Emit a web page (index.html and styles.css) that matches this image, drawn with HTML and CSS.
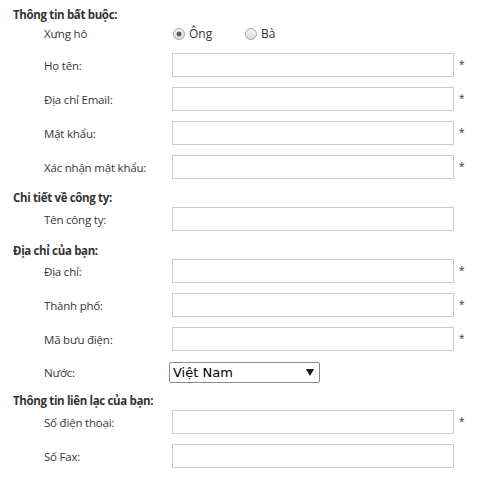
FILE: index.html
```html
<!DOCTYPE html>
<html lang="vi">
<head>
<meta charset="utf-8">
<title>Form</title>
<link rel="stylesheet" href="styles.css">
</head>
<body>
<form class="form">
  <div class="title t1">Thông tin bất buộc:</div>
  <div class="row radio-row">
    <span class="label">Xưng hô</span>
    <div class="radios">
      <label class="opt opt1"><input type="radio" name="g" checked><span>Ông</span></label>
      <label class="opt"><input type="radio" name="g"><span>Bà</span></label>
    </div>
  </div>
  <div class="row r-first"><span class="label">Họ tên:</span><input class="field" type="text"><span class="req">*</span></div>
  <div class="row"><span class="label">Địa chỉ Email:</span><input class="field" type="text"><span class="req">*</span></div>
  <div class="row"><span class="label">Mật khẩu:</span><input class="field" type="password"><span class="req">*</span></div>
  <div class="row"><span class="label">Xác nhận mật khẩu:</span><input class="field" type="password"><span class="req">*</span></div>

  <div class="title t2">Chi tiết về công ty:</div>
  <div class="row r-after2"><span class="label">Tên công ty:</span><input class="field" type="text"></div>

  <div class="title t3">Địa chỉ của bạn:</div>
  <div class="row r-after3"><span class="label">Địa chỉ:</span><input class="field" type="text"><span class="req">*</span></div>
  <div class="row"><span class="label">Thành phố:</span><input class="field" type="text"><span class="req">*</span></div>
  <div class="row"><span class="label">Mã bưu điện:</span><input class="field" type="text"><span class="req">*</span></div>
  <div class="row select-row">
    <span class="label">Nước:</span>
    <div class="select-wrap">
      <select class="select"><option>Việt Nam</option></select>
    </div>
  </div>

  <div class="title t4">Thông tin liên lạc của bạn:</div>
  <div class="row r-after4"><span class="label">Số điện thoại:</span><input class="field" type="text"><span class="req">*</span></div>
  <div class="row"><span class="label">Số Fax:</span><input class="field" type="text"></div>
</form>
</body>
</html>
```
FILE: styles.css
```css
html, body {
  margin: 0;
  padding: 0;
  background: #fff;
}
body {
  font-family: "Open Sans", "Noto Sans", sans-serif;
  font-size: 12px;
  color: #333;
}
.form {
  padding: 7px 0 0 13px;
  margin: 0;
}
.title {
  font-weight: bold;
  font-size: 11.5px;
  letter-spacing: -0.35px;
  line-height: 15px;
  color: #333;
}
.t2 { margin-top: 11px; }
.t3 { margin-top: 12px; }
.t4 { margin-top: 10px; }

.row {
  display: grid;
  grid-template-columns: 159px 282px auto;
  align-items: center;
  height: 24px;
  margin-top: 10px;
}
.radio-row { margin-top: 0; }
.r-first { margin-top: 7px; }
.r-after2 { margin-top: 2px; }
.r-after3 { margin-top: 1px; }
.r-after4 { margin-top: 2px; }

.label {
  padding-left: 31px;
  font-size: 11.5px;
  letter-spacing: -0.2px;
  line-height: 16px;
  position: relative;
  top: 1px;
  color: #3a3530;
}
.radio-row .label { top: 0; }
.select-row .label { top: 0; }

.field {
  box-sizing: border-box;
  width: 282px;
  height: 24px;
  margin: 0;
  border: 1px solid #cccccc;
  background: #fff;
  padding: 2px 4px;
  font: inherit;
}
.req {
  padding-left: 5px;
  font-size: 10px;
  line-height: 10px;
  color: #333;
  position: relative;
  top: -1px;
}

.radios {
  display: flex;
  align-items: center;
}
.opt {
  display: flex;
  align-items: center;
  gap: 4px;
  line-height: 16px;
  font-size: 12px;
}
.opt1 { width: 72px; }
.opt input {
  appearance: none;
  -webkit-appearance: none;
  box-sizing: border-box;
  width: 12px;
  height: 12px;
  margin: 0 0 0 1px;
  border: 1px solid #a8a8a8;
  border-radius: 50%;
  background: linear-gradient(#f4f4f4, #dcdcdc);
}
.opt input:checked {
  background: radial-gradient(circle, #555 0, #666 2.2px, transparent 2.8px), linear-gradient(#f4f4f4, #dcdcdc);
}

.select-row {
  height: 21px;
  margin-top: 11px;
}
.select-wrap {
  position: relative;
  width: 151px;
  height: 21px;
  margin-left: -3px;
}
.select {
  appearance: none;
  -webkit-appearance: none;
  box-sizing: border-box;
  width: 151px;
  height: 21px;
  margin: 0;
  padding: 0 0 0 3px;
  border: 1px solid #8a8a8a;
  border-radius: 2px;
  background: #fff;
  font-family: "DejaVu Sans", Verdana, sans-serif;
  font-size: 13px;
  color: #000;
}
.select-wrap::after {
  content: "";
  position: absolute;
  right: 6px;
  top: 7px;
  border-left: 4px solid transparent;
  border-right: 4px solid transparent;
  border-top: 7px solid #111;
  pointer-events: none;
}
```
